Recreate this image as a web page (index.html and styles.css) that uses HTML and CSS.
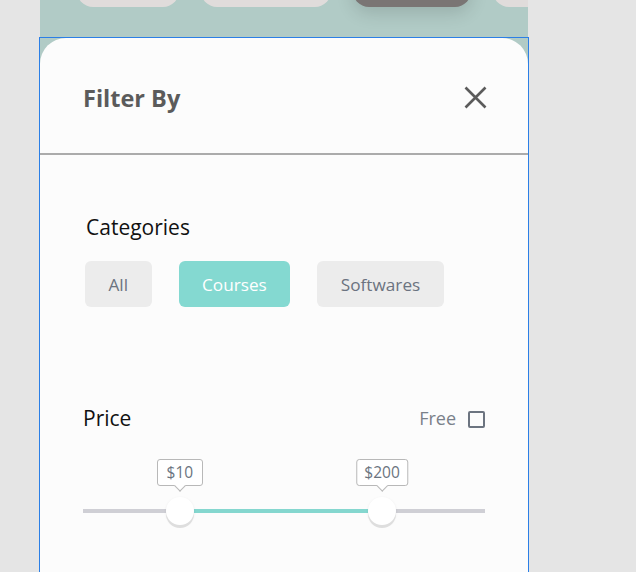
FILE: index.html
```html
<!DOCTYPE html>
<html lang="en">
<head>
<meta charset="utf-8">
<title>Filter By</title>
<link rel="stylesheet" href="styles.css">
</head>
<body>
<div class="phone">
  <div class="top-strip">
    <span class="top-chip w1"></span>
    <span class="top-chip w2"></span>
    <span class="top-chip w3 dark"></span>
    <span class="top-chip w4"></span>
  </div>
  <div class="sheet-frame">
    <div class="sheet">
      <header class="sheet-header">
        <h1 class="sheet-title">Filter By</h1>
        <button class="close-btn" aria-label="Close">
          <svg width="23" height="23" viewBox="0 0 23 23"><path d="M1.5 1.5 L21.5 21.5 M21.5 1.5 L1.5 21.5" stroke="#5b5b5b" stroke-width="2.6" fill="none"/></svg>
        </button>
      </header>
      <section class="categories">
        <h2 class="section-title">Categories</h2>
        <div class="chip-row">
          <button class="chip">All</button>
          <button class="chip active">Courses</button>
          <button class="chip">Softwares</button>
        </div>
      </section>
      <section class="price">
        <div class="price-head">
          <h2 class="section-title">Price</h2>
          <label class="free">Free <span class="checkbox"></span></label>
        </div>
        <div class="slider">
          <div class="track">
            <div class="track-fill" style="left: 24.1%; width: 50.3%;"></div>
            <div class="handle" style="left: 24.1%;">
              <span class="tip">$10</span>
              <span class="thumb"></span>
            </div>
            <div class="handle" style="left: 74.4%;">
              <span class="tip">$200</span>
              <span class="thumb"></span>
            </div>
          </div>
        </div>
      </section>
    </div>
  </div>
</div>
</body>
</html>
```
FILE: styles.css
```css
* { box-sizing: border-box; }
html, body { margin: 0; padding: 0; }
body {
  background: #e5e5e5;
  font-family: "Open Sans", "Noto Sans", sans-serif;
  height: 572px;
  overflow: hidden;
}
.phone {
  margin-left: 40px;
  width: 488px;
  height: 572px;
  background: #b1cbc6;
  display: flex;
  flex-direction: column;
}
.top-strip {
  height: 38px;
  flex: 0 0 38px;
  display: flex;
  gap: 22px;
  padding-left: 37px;
  overflow: hidden;
}
.top-chip {
  display: block;
  height: 40px;
  margin-top: -33px;
  border-radius: 16px;
  background: #e0dcdb;
  flex: 0 0 auto;
}
.w1 { width: 102px; }
.w2 { width: 130px; }
.w3 { width: 118px; }
.w4 { width: 90px; }
.top-chip.dark {
  background: #7a7574;
  box-shadow: 0 6px 18px rgba(0,0,0,0.14);
}
.sheet-frame {
  flex: 1;
  outline: 1px solid #2b7fe6;
  display: flex;
  flex-direction: column;
}
.sheet {
  flex: 1;
  background: #fcfcfc;
  border-radius: 26px 26px 0 0;
}
.sheet-header {
  height: 117px;
  padding: 4px 41px 0 43px;
  display: flex;
  align-items: center;
  justify-content: space-between;
  border-bottom: 2px solid #ababab;
}
.sheet-title {
  margin: 0;
  font-size: 23.5px;
  font-weight: 700;
  color: #5b5b5b;
  line-height: 32px;
}
.close-btn {
  border: 0;
  background: none;
  padding: 0;
  width: 23px;
  height: 23px;
  display: block;
}
.close-btn svg { display: block; }
.section-title {
  margin: 0;
  font-size: 21px;
  font-weight: 500;
  color: #111;
  line-height: 28px;
}
.categories {
  padding: 58px 43px 0 46px;
}
.chip-row {
  margin-top: 20px;
  margin-left: -1px;
  display: flex;
  gap: 27px;
}
.chip {
  height: 46px;
  padding: 0 23.5px;
  border: 0;
  border-radius: 6px;
  background: #ececec;
  color: #6b7380;
  font-family: "Open Sans", "Noto Sans", sans-serif;
  font-size: 17.2px;
}
.chip.active {
  background: #84d9d1;
  color: #fff;
}
.price {
  padding: 97px 43px 0 43px;
}
.price-head {
  display: flex;
  align-items: center;
  justify-content: space-between;
}
.free {
  display: flex;
  align-items: center;
  gap: 12px;
  font-size: 18px;
  color: #7a8089;
  line-height: 28px;
}
.checkbox {
  width: 17px;
  height: 17px;
  border: 2px solid #6c7480;
  border-radius: 2px;
  margin-top: 3px;
}
.slider {
  padding-top: 77px;
  padding-bottom: 20px;
}
.track {
  position: relative;
  height: 4px;
  background: #cfcfd5;
}
.track-fill {
  position: absolute;
  top: 0;
  height: 4px;
  background: #85d7cf;
}
.handle {
  position: absolute;
  top: 2px;
  width: 0;
  height: 0;
}
.thumb {
  position: absolute;
  left: -14px;
  top: -14px;
  width: 28px;
  height: 28px;
  border-radius: 50%;
  background: #fff;
  box-shadow: 0 3px 0 #dedede, 0 1px 3px rgba(0,0,0,0.08);
}
.tip {
  position: absolute;
  bottom: 25px;
  left: 0;
  transform: translateX(-50%);
  min-width: 46px;
  height: 27px;
  padding: 0 7px;
  border: 1px solid #b8b8b8;
  border-radius: 3px;
  background: #fff;
  color: #6b7480;
  font-size: 15.5px;
  line-height: 25px;
  text-align: center;
  white-space: nowrap;
}
.tip::after {
  content: "";
  position: absolute;
  left: 50%;
  bottom: -5px;
  width: 7px;
  height: 7px;
  margin-left: -4px;
  background: #fff;
  border-right: 1px solid #b8b8b8;
  border-bottom: 1px solid #b8b8b8;
  transform: rotate(45deg);
}
```
